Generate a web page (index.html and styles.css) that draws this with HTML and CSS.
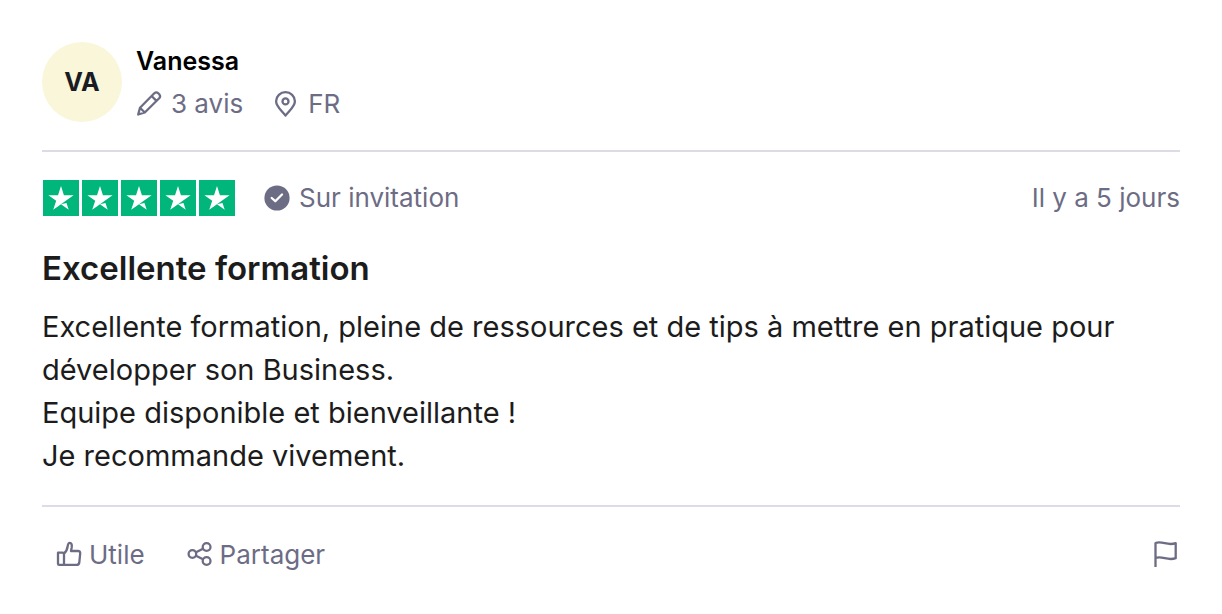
FILE: index.html
```html
<!DOCTYPE html>
<html lang="fr">
<head>
    <meta charset="UTF-8">
    <meta name="viewport" content="width=device-width, initial-scale=1.0">
    <title>Avis de Vanessa</title>
    <link rel="stylesheet" href="styles.css">
</head>
<body>
    <!-- Shared star shape for the rating -->
    <svg class="defs" aria-hidden="true">
        <symbol id="star" viewBox="0 0 48 48">
            <path d="M24 32.3 L31.3 30.5 L34.3 39.8 Z M40.8 20.2 H27.9 L24 8 L20 20.2 H7.2 L17.6 27.7 L13.6 39.8 L24 32.3 L30.4 27.7 Z"/>
        </symbol>
    </svg>

    <article class="review">
        <!-- Reviewer -->
        <header class="reviewer">
            <div class="avatar">VA</div>
            <div class="reviewer-info">
                <a href="#" class="name">Vanessa</a>
                <div class="details">
                    <span class="detail">
                        <svg class="icon" viewBox="0 0 26 26" aria-hidden="true">
                            <path d="M2.2 23.5 L4 16.7 L18.3 2.3 Q20.3 0.5 22.3 2.3 L23.2 3.2 Q25 5.2 23.2 7.2 L8.8 21.5 Z M15.6 5 L20.5 9.9 M4 16.7 L8.8 21.5"/>
                        </svg>
                        3 avis
                    </span>
                    <span class="detail">
                        <svg class="icon" viewBox="0 0 26 26" aria-hidden="true">
                            <path d="M12.5 24.5 C9 19.9 3.1 15.6 3.1 10.2 A9.4 9 0 0 1 21.9 10.2 C21.9 15.6 16 19.9 12.5 24.5 Z"/>
                            <circle cx="12.5" cy="10.4" r="3"/>
                        </svg>
                        FR
                    </span>
                </div>
            </div>
        </header>

        <!-- Rating and review text -->
        <section class="content">
            <div class="rating-row">
                <div class="stars" role="img" aria-label="5 étoiles sur 5">
                    <svg class="star"><use href="#star"/></svg>
                    <svg class="star"><use href="#star"/></svg>
                    <svg class="star"><use href="#star"/></svg>
                    <svg class="star"><use href="#star"/></svg>
                    <svg class="star"><use href="#star"/></svg>
                </div>
                <span class="invited">
                    <svg class="icon" viewBox="0 0 26 26" aria-hidden="true">
                        <circle class="badge" cx="13" cy="13" r="12.6"/>
                        <path class="check" d="M7.7 13 L11.3 16.2 L18 9.5"/>
                    </svg>
                    Sur invitation
                </span>
                <time class="date">Il y a 5 jours</time>
            </div>
            <h2>Excellente formation</h2>
            <p>Excellente formation, pleine de ressources et de tips à mettre en pratique pour développer son Business.<br>Equipe disponible et bienveillante !<br>Je recommande vivement.</p>
        </section>

        <!-- Actions -->
        <footer class="actions">
            <button type="button">
                <svg class="icon" viewBox="0 0 26 26" aria-hidden="true">
                    <path d="M2 11.7 H6.5 Q8 11.7 8 13.2 V23.9 H3.2 Q2 23.9 2 22.7 Z M8 12.5 C10.2 10.8 11.2 8.7 11.6 5.5 C11.9 3 12.4 1.8 13.7 1.8 C15.6 1.8 16.1 4 15.7 6.4 L15 10 H22 Q24.4 10 24.2 12.5 L23.3 21.5 Q23 23.9 20.6 23.9 H8"/>
                </svg>
                Utile
            </button>
            <button type="button">
                <svg class="icon" viewBox="0 0 26 26" aria-hidden="true">
                    <circle cx="5.4" cy="13" r="3.8"/>
                    <circle cx="19.6" cy="6" r="3.9"/>
                    <circle cx="19.6" cy="20" r="3.9"/>
                    <path d="M9 11.3 L16 7.7 M9 14.7 L16 18.2"/>
                </svg>
                Partager
            </button>
            <button type="button" class="flag" aria-label="Signaler">
                <svg class="icon" viewBox="0 0 26 26" aria-hidden="true">
                    <path d="M1.5 26 V2 C8.5 -0.5 13.5 5.2 21.7 2.2 V17.2 C13.5 20.2 8.5 14.5 1.5 17"/>
                </svg>
            </button>
        </footer>
    </article>
</body>
</html>
```

FILE: styles.css
```css
body {
    margin: 0;
    background-color: #fff;
    color: #1c1c1c;
    font-family: Inter, "Liberation Sans", Arial, sans-serif;
}
.defs {
    display: none;
}
.review {
    padding: 42px 42px 40px;
}
/* Outline icons */
.icon {
    width: 26px;
    height: 26px;
    flex: none;
    fill: none;
    stroke: #6c6c85;
    stroke-width: 2.3;
    stroke-linejoin: round;
}
/* Reviewer block */
.reviewer {
    display: flex;
    gap: 14px;
    padding-bottom: 28px;
    border-bottom: 2px solid #dcdce6;
}
.avatar {
    display: flex;
    align-items: center;
    justify-content: center;
    width: 80px;
    height: 80px;
    border-radius: 50%;
    background-color: #faf6d9;
    color: #191c22;
    font-size: 25px;
    font-weight: 700;
}
.name {
    display: block;
    color: #000;
    font-size: 25px;
    font-weight: 600;
    line-height: 38px;
    text-decoration: none;
}
.details {
    display: flex;
    gap: 30px;
    margin-top: 6px;
}
.detail, .invited, .date {
    color: #6c6c85;
    font-size: 26px;
    line-height: 36px;
}
.detail, .invited {
    display: flex;
    align-items: center;
    gap: 9px;
}
/* Review content */
.content {
    padding: 28px 0;
    border-bottom: 2px solid #dcdce6;
}
.rating-row {
    display: flex;
    align-items: center;
}
.stars {
    display: flex;
    gap: 3px;
    margin: 0 29px 0 1px;
}
.star {
    width: 36px;
    height: 36px;
    background-color: #00b67a;
    fill: #fff;
}
.icon .badge {
    fill: #6c6c85;
    stroke: none;
}
.icon .check {
    stroke: #fff;
    stroke-linecap: round;
}
.date {
    margin-left: auto;
}
h2 {
    margin: 32px 0 17px;
    font-size: 33px;
    font-weight: 600;
    line-height: 40px;
}
p {
    margin: 0;
    font-size: 29px;
    line-height: 43px;
}
/* Action buttons */
.actions {
    display: flex;
    align-items: center;
    gap: 42px;
    padding: 27px 0 0 14px;
}
button {
    display: flex;
    align-items: center;
    gap: 7px;
    height: 40px;
    padding: 0;
    border: 0;
    background: none;
    color: #6c6c85;
    font-family: inherit;
    font-size: 26px;
    cursor: pointer;
}
.flag {
    margin-left: auto;
}
```
